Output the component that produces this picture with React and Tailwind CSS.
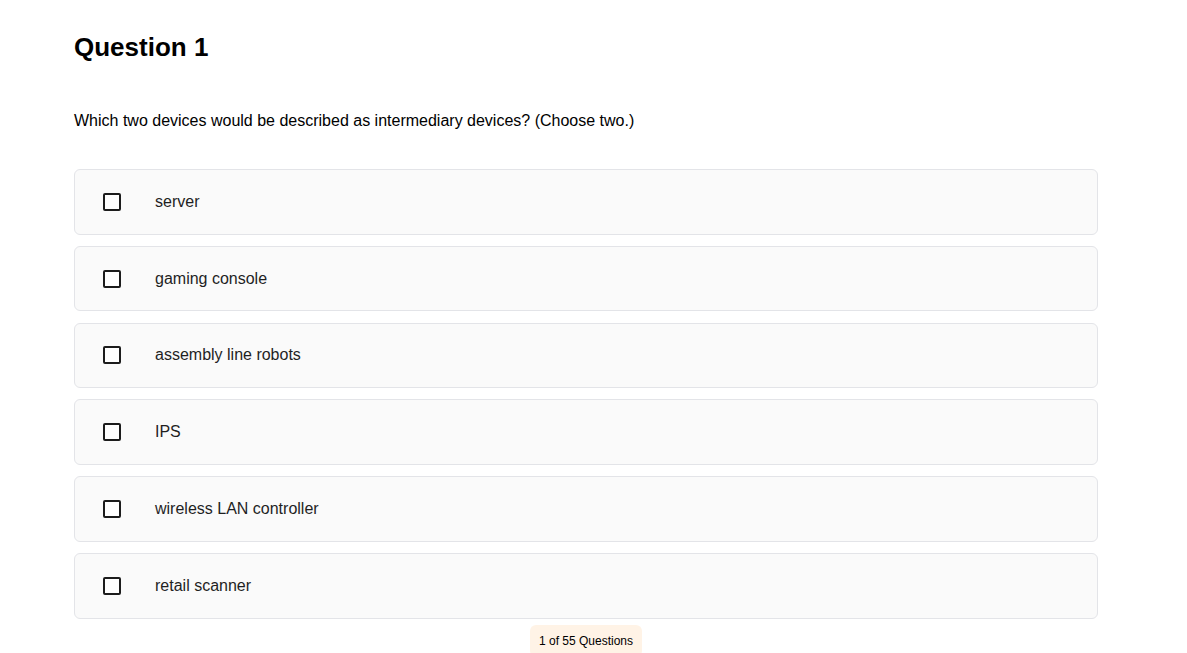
import React from 'react';

const options = [
    'server',
    'gaming console',
    'assembly line robots',
    'IPS',
    'wireless LAN controller',
    'retail scanner',
];

export default function App() {
    return (
        <div className="min-h-screen bg-white font-['Liberation_Sans',Arial,sans-serif] text-[#111]">
            <div className="w-[1024px] ml-[74px] pt-[31px]">
                <h1 className="text-[26px] leading-[32px] font-bold text-black">Question 1</h1>
                <p className="mt-[46px] text-[16px] leading-[24px] text-black">
                    Which two devices would be described as intermediary devices? (Choose two.)
                </p>

                {/* Options */}
                <div className="mt-[36px] flex flex-col gap-[11.2px]">
                    {options.map((opt) => (
                        <label
                            key={opt}
                            className="h-[65.6px] flex items-center bg-[#fafafa] border border-[#e3e4e8] rounded-[6px] cursor-pointer"
                        >
                            <span className="ml-[28px] w-[18px] h-[18px] border-2 border-[#1c1c1c] rounded-[2px] bg-white shrink-0" />
                            <span className="ml-[34px] text-[16px] text-[#1f1f1f]">{opt}</span>
                        </label>
                    ))}
                </div>

                <div className="flex justify-center mt-[6px]">
                    <span className="px-[9px] pt-[8px] pb-[8px] rounded-[6px] bg-[#fff3e6] text-[12px] leading-[16px] text-black">
                        1 of 55 Questions
                    </span>
                </div>
            </div>
        </div>
    );
}
